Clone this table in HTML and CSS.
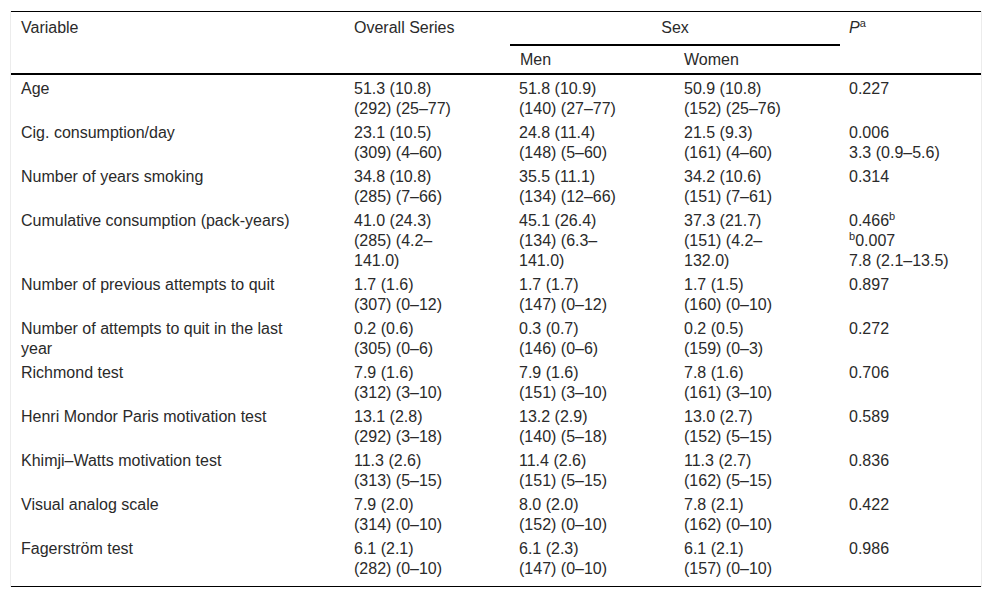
FILE: index.html
```html
<!DOCTYPE html>
<html lang="en">
<head>
<meta charset="utf-8">
<title>Table</title>
<link rel="stylesheet" href="styles.css">
</head>
<body>
<div class="wrap">
<table class="data">
<colgroup>
<col class="c-var"><col class="c-num"><col class="c-num"><col class="c-num"><col class="c-p">
</colgroup>
<thead>
<tr class="h1">
<th rowspan="2" class="hb">Variable</th>
<th rowspan="2" class="hb">Overall Series</th>
<th colspan="2" class="sex">Sex</th>
<th rowspan="2" class="hb"><i>P</i><sup>a</sup></th>
</tr>
<tr class="h2">
<th class="hb">Men</th>
<th class="hb">Women</th>
</tr>
</thead>
<tbody>
<tr><td class="v">Age</td><td class="n">51.3 (10.8)<br>(292) (25–77)</td><td class="n">51.8 (10.9)<br>(140) (27–77)</td><td class="n">50.9 (10.8)<br>(152) (25–76)</td><td>0.227</td></tr>
<tr><td class="v">Cig. consumption/day</td><td class="n">23.1 (10.5)<br>(309) (4–60)</td><td class="n">24.8 (11.4)<br>(148) (5–60)</td><td class="n">21.5 (9.3)<br>(161) (4–60)</td><td>0.006<br>3.3 (0.9–5.6)</td></tr>
<tr><td class="v">Number of years smoking</td><td class="n">34.8 (10.8)<br>(285) (7–66)</td><td class="n">35.5 (11.1)<br>(134) (12–66)</td><td class="n">34.2 (10.6)<br>(151) (7–61)</td><td>0.314</td></tr>
<tr><td class="v">Cumulative consumption (pack-years)</td><td class="n">41.0 (24.3)<br>(285) (4.2–141.0)</td><td class="n">45.1 (26.4)<br>(134) (6.3–141.0)</td><td class="n">37.3 (21.7)<br>(151) (4.2–132.0)</td><td>0.466<sup>b</sup><br><sup>b</sup>0.007<br>7.8 (2.1–13.5)</td></tr>
<tr><td class="v">Number of previous attempts to quit</td><td class="n">1.7 (1.6)<br>(307) (0–12)</td><td class="n">1.7 (1.7)<br>(147) (0–12)</td><td class="n">1.7 (1.5)<br>(160) (0–10)</td><td>0.897</td></tr>
<tr><td class="v">Number of attempts to quit in the last year</td><td class="n">0.2 (0.6)<br>(305) (0–6)</td><td class="n">0.3 (0.7)<br>(146) (0–6)</td><td class="n">0.2 (0.5)<br>(159) (0–3)</td><td>0.272</td></tr>
<tr><td class="v">Richmond test</td><td class="n">7.9 (1.6)<br>(312) (3–10)</td><td class="n">7.9 (1.6)<br>(151) (3–10)</td><td class="n">7.8 (1.6)<br>(161) (3–10)</td><td>0.706</td></tr>
<tr><td class="v">Henri Mondor Paris motivation test</td><td class="n">13.1 (2.8)<br>(292) (3–18)</td><td class="n">13.2 (2.9)<br>(140) (5–18)</td><td class="n">13.0 (2.7)<br>(152) (5–15)</td><td>0.589</td></tr>
<tr><td class="v">Khimji–Watts motivation test</td><td class="n">11.3 (2.6)<br>(313) (5–15)</td><td class="n">11.4 (2.6)<br>(151) (5–15)</td><td class="n">11.3 (2.7)<br>(162) (5–15)</td><td>0.836</td></tr>
<tr><td class="v">Visual analog scale</td><td class="n">7.9 (2.0)<br>(314) (0–10)</td><td class="n">8.0 (2.0)<br>(152) (0–10)</td><td class="n">7.8 (2.1)<br>(162) (0–10)</td><td>0.422</td></tr>
<tr class="last"><td class="v">Fagerström test</td><td class="n">6.1 (2.1)<br>(282) (0–10)</td><td class="n">6.1 (2.3)<br>(147) (0–10)</td><td class="n">6.1 (2.1)<br>(157) (0–10)</td><td>0.986</td></tr>
</tbody>
</table>
</div>
</body>
</html>
```
FILE: styles.css
```css
html, body {
  margin: 0;
  padding: 0;
  background: #fff;
}
body {
  font-family: "Liberation Sans", Arial, sans-serif;
  font-size: 16px;
  line-height: 20px;
  color: #2a2a2a;
}
.wrap {
  margin: 11px 0 0 10px;
  width: 970px;
  border-left: 1px solid #ececec;
  border-right: 1px solid #ececec;
}
.data {
  width: 970px;
  table-layout: fixed;
  border-collapse: collapse;
  border-top: 1px solid #000;
  border-bottom: 1px solid #000;
}
.c-var { width: 334px; }
.c-num { width: 165px; }
.c-p { width: 141px; }
th, td {
  text-align: left;
  vertical-align: top;
  font-weight: normal;
  padding: 4px 9px 0 9px;
}
th:first-child, td:first-child {
  padding-left: 10px;
}
.h1 th {
  padding-top: 6px;
  padding-bottom: 6px;
}
.h2 th {
  padding-top: 4px;
  padding-bottom: 3px;
}
.hb {
  border-bottom: 2px solid #000;
}
.sex {
  text-align: center;
  border-bottom: 2px solid #000;
}
td.v {
  padding-right: 39px;
}
td.n {
  padding-right: 46px;
}
tr.last td {
  padding-bottom: 7px;
}
sup {
  font-size: 11px;
  line-height: 0;
  vertical-align: 6px;
}
```
